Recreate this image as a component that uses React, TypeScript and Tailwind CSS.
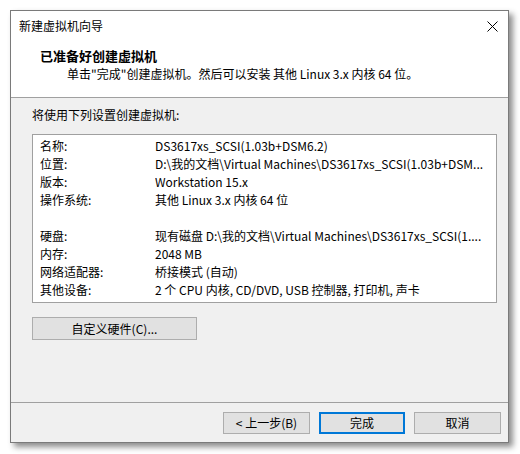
const rows: [string, string][] = [
  ["名称:", "DS3617xs_SCSI(1.03b+DSM6.2)"],
  ["位置:", "D:\\我的文档\\Virtual Machines\\DS3617xs_SCSI(1.03b+DSM..."],
  ["版本:", "Workstation 15.x"],
  ["操作系统:", "其他 Linux 3.x 内核 64 位"],
  ["", ""],
  ["硬盘:", "现有磁盘 D:\\我的文档\\Virtual Machines\\DS3617xs_SCSI(1...."],
  ["内存:", "2048 MB"],
  ["网络适配器:", "桥接模式 (自动)"],
  ["其他设备:", "2 个 CPU 内核, CD/DVD, USB 控制器, 打印机, 声卡"],
];

const font = { fontFamily: '"Noto Sans CJK SC", sans-serif' };

function CloseIcon() {
  return (
    <svg width="11" height="11" viewBox="0 0 11 11" className="block">
      <path d="M0.5 0.5 L10.5 10.5 M10.5 0.5 L0.5 10.5" stroke="#000" strokeWidth="1" />
    </svg>
  );
}

export default function App() {
  return (
    <div className="w-[520px] h-[454px] bg-white pl-[10px] pt-[10px] text-[12px] text-black" style={font}>
      <div className="w-[499px] h-[433px] border border-[#7a7a7a] bg-[#f0f0f0] flex flex-col shadow-[4px_4px_6px_rgba(0,0,0,0.45)]">
        {/* Title bar */}
        <div className="h-[30px] bg-white flex items-center justify-between pl-[8px] pr-[10px]">
          <span className="leading-[16px]">新建虚拟机向导</span>
          <CloseIcon />
        </div>

        {/* Header */}
        <div className="h-[57px] bg-white border-b border-[#a0a0a0] pl-[29px] pt-[6px]">
          <div className="font-bold text-[13px] leading-[18px]">已准备好创建虚拟机</div>
          <div className="pl-[27px] leading-[17px]">单击"完成"创建虚拟机。然后可以安装 其他 Linux 3.x 内核 64 位。</div>
        </div>

        {/* Body */}
        <div className="flex-1 px-[21px] pt-[9px]">
          <div className="leading-[16px]">将使用下列设置创建虚拟机:</div>
          <div className="mt-[11px] w-[465px] h-[169px] bg-white border border-[#a0a0a0] pt-[2px] pl-[7px]">
            {rows.map(([label, value], i) => (
              <div key={i} className="flex h-[18px] items-center whitespace-nowrap">
                <span className="w-[115px] shrink-0">{label}</span>
                <span className="overflow-hidden">{value}</span>
              </div>
            ))}
          </div>
          <button className="mt-[14px] w-[165px] h-[23px] bg-[#e1e1e1] border border-[#adadad] flex items-center justify-center leading-[16px]">
            自定义硬件(C)...
          </button>
        </div>

        {/* Footer */}
        <div className="h-[40px] border-t border-[#a0a0a0] flex items-start justify-end gap-[9px] pt-[9px] pr-[7px]">
          <button className="w-[87px] h-[22px] bg-[#e1e1e1] border border-[#adadad] flex items-center justify-center leading-[16px]">
            &lt; 上一步(B)
          </button>
          <button className="w-[86px] h-[22px] bg-[#e1e1e1] border-2 border-[#0078d7] flex items-center justify-center leading-[16px]">
            完成
          </button>
          <button className="w-[87px] h-[22px] bg-[#e1e1e1] border border-[#adadad] flex items-center justify-center leading-[16px]">
            取消
          </button>
        </div>
      </div>
    </div>
  );
}
